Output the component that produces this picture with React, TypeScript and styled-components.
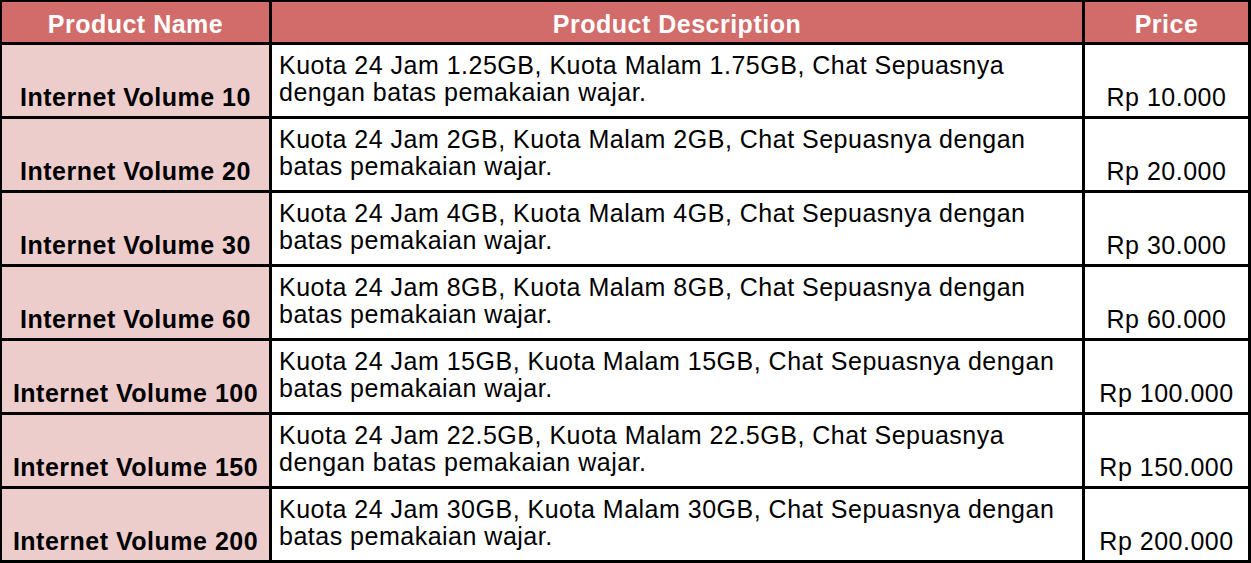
import styled, { createGlobalStyle } from 'styled-components';

const GlobalStyle = createGlobalStyle`
  html, body {
    margin: 0;
    padding: 0;
    background: #ffffff;
  }

  body {
    font-family: 'Liberation Sans', Arial, sans-serif;
  }
`;

const Table = styled.table`
  width: 1251px;
  table-layout: fixed;
  border-collapse: separate;
  border-spacing: 0;
  border-top: 2px solid #000;
  border-left: 2px solid #000;
  box-sizing: border-box;
  font-size: 25px;
  line-height: 27px;
  letter-spacing: 0.5px;
  color: #000;
`;

const HeadCell = styled.th<{ $width: number }>`
  width: ${(p) => p.$width}px;
  height: 43px;
  box-sizing: border-box;
  padding: 0 4px 4px;
  background-color: #d26c6a;
  color: #fff;
  font-weight: bold;
  text-align: center;
  vertical-align: bottom;
  border-right: 3px solid #000;
  border-bottom: 3px solid #000;
`;

const Cell = styled.td`
  height: 74px;
  box-sizing: border-box;
  border-right: 3px solid #000;
  border-bottom: 3px solid #000;
  white-space: nowrap;
`;

const NameCell = styled(Cell)`
  padding: 0 4px 5px;
  background-color: #edcdcc;
  font-weight: bold;
  text-align: center;
  vertical-align: bottom;
`;

const DescCell = styled(Cell)`
  padding: 7px 8px 0 7px;
  text-align: left;
  vertical-align: top;
  white-space: normal;
`;

const PriceCell = styled(Cell)`
  padding: 0 4px 5px;
  text-align: center;
  vertical-align: bottom;
`;

const products = [
  {
    name: 'Internet Volume 10',
    desc: 'Kuota 24 Jam 1.25GB, Kuota Malam 1.75GB, Chat Sepuasnya dengan batas pemakaian wajar.',
    price: 'Rp 10.000',
  },
  {
    name: 'Internet Volume 20',
    desc: 'Kuota 24 Jam 2GB, Kuota Malam 2GB, Chat Sepuasnya dengan batas pemakaian wajar.',
    price: 'Rp 20.000',
  },
  {
    name: 'Internet Volume 30',
    desc: 'Kuota 24 Jam 4GB, Kuota Malam 4GB, Chat Sepuasnya dengan batas pemakaian wajar.',
    price: 'Rp 30.000',
  },
  {
    name: 'Internet Volume 60',
    desc: 'Kuota 24 Jam 8GB, Kuota Malam 8GB, Chat Sepuasnya dengan batas pemakaian wajar.',
    price: 'Rp 60.000',
  },
  {
    name: 'Internet Volume 100',
    desc: 'Kuota 24 Jam 15GB, Kuota Malam 15GB, Chat Sepuasnya dengan batas pemakaian wajar.',
    price: 'Rp 100.000',
  },
  {
    name: 'Internet Volume 150',
    desc: 'Kuota 24 Jam 22.5GB, Kuota Malam 22.5GB, Chat Sepuasnya dengan batas pemakaian wajar.',
    price: 'Rp 150.000',
  },
  {
    name: 'Internet Volume 200',
    desc: 'Kuota 24 Jam 30GB, Kuota Malam 30GB, Chat Sepuasnya dengan batas pemakaian wajar.',
    price: 'Rp 200.000',
  },
];

const App = () => {
  return (
    <>
      <GlobalStyle />
      <Table>
        <thead>
          <tr>
            <HeadCell $width={270}>Product Name</HeadCell>
            <HeadCell $width={813}>Product Description</HeadCell>
            <HeadCell $width={166}>Price</HeadCell>
          </tr>
        </thead>
        <tbody>
          {products.map((item) => (
            <tr key={item.name}>
              <NameCell>{item.name}</NameCell>
              <DescCell>{item.desc}</DescCell>
              <PriceCell>{item.price}</PriceCell>
            </tr>
          ))}
        </tbody>
      </Table>
    </>
  );
};

export default App;
